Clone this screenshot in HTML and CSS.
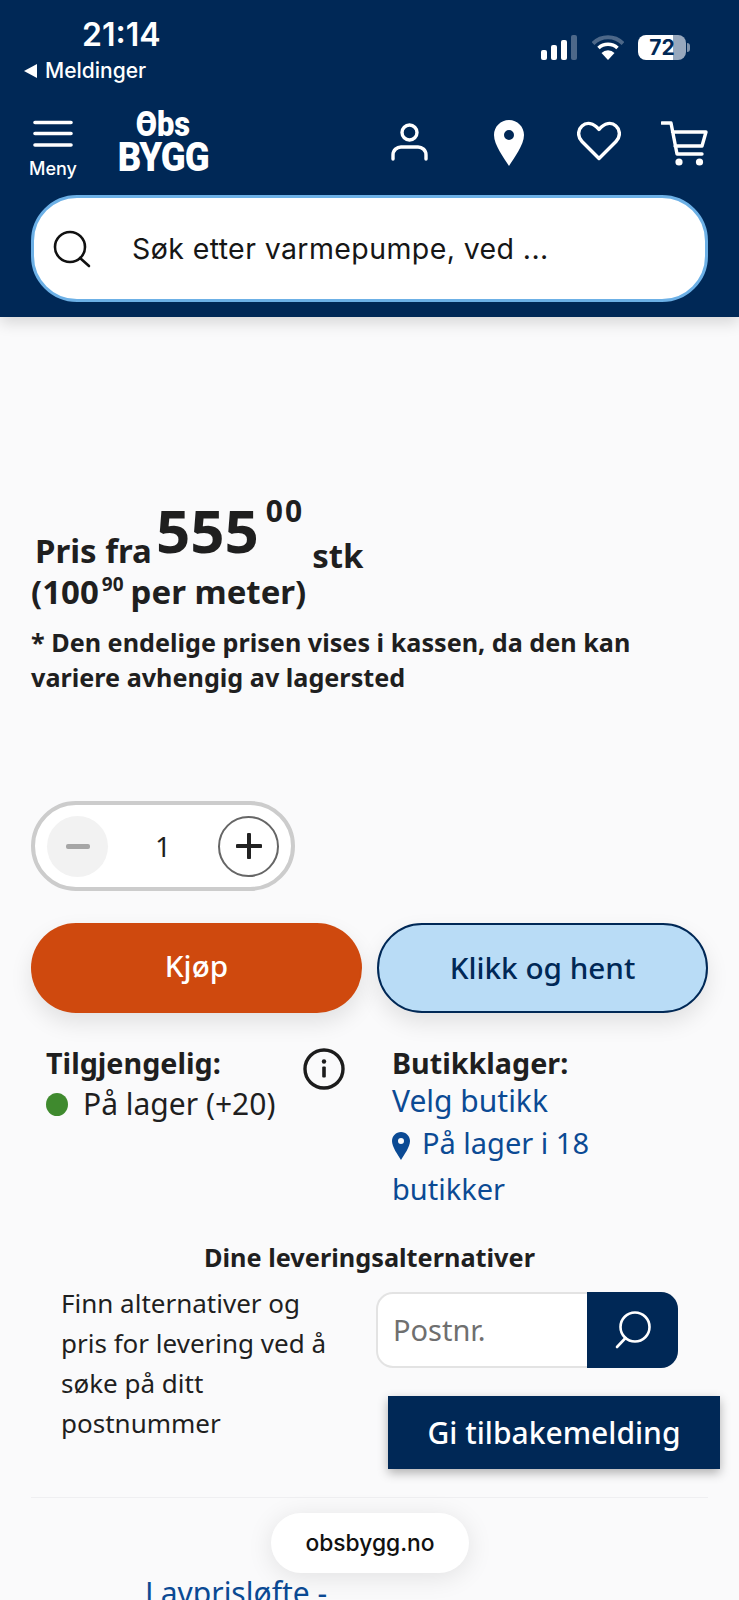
FILE: index.html
```html
<!DOCTYPE html>
<html lang="no">
<head>
  <meta charset="UTF-8">
  <meta name="viewport" content="width=device-width, initial-scale=1.0">
  <title>Obs BYGG</title>
  <link rel="stylesheet" href="styles.css">
</head>
<body>

  <header class="header">
    <!-- Phone status bar -->
    <div class="status">
      <div class="status-left">
        <div class="time">21:14</div>
        <div class="back"><span class="back-arrow"></span>Meldinger</div>
      </div>
      <div class="status-right">
        <svg width="37" height="25" viewBox="0 0 37 25">
          <rect x="0" y="15" width="6" height="10" rx="2" fill="#fff"/>
          <rect x="10" y="10" width="6" height="15" rx="2" fill="#fff"/>
          <rect x="20" y="5" width="6" height="20" rx="2" fill="#fff"/>
          <rect x="30" y="0" width="6" height="25" rx="2" fill="#fff" opacity="0.3"/>
        </svg>
        <svg width="32" height="25" viewBox="0 0 32 25">
          <path d="M1 8.5 A21 21 0 0 1 31 8.5" fill="none" stroke="#fff" stroke-opacity="0.3" stroke-width="4"/>
          <path d="M6.5 13 A14 14 0 0 1 25.5 13" fill="none" stroke="#fff" stroke-width="3.6"/>
          <path d="M16 25 L9.5 18 A9 9 0 0 1 22.5 18 Z" fill="#fff"/>
        </svg>
        <div class="battery"><span class="battery-num">72</span></div>
      </div>
    </div>

    <!-- Logo and icons -->
    <nav class="nav">
      <div class="menu">
        <svg width="40" height="28" viewBox="0 0 40 28">
          <path d="M2 2.5H38M2 13.5H38M2 25H38" stroke="#fff" stroke-width="3.6" stroke-linecap="round"/>
        </svg>
        <span class="menu-label">Meny</span>
      </div>
      <div class="logo">
        <span class="logo-top"><span class="logo-o">O</span>bs</span>
        <span class="logo-bottom">BYGG</span>
      </div>
      <div class="nav-icons">
        <svg class="icon-user" width="37" height="38" viewBox="0 0 37 38">
          <circle cx="18.5" cy="9.5" r="7.5" fill="none" stroke="#fff" stroke-width="3.4"/>
          <path d="M2 36V32C2 27 6 24 10 24H27C31 24 35 27 35 32V36" fill="none" stroke="#fff" stroke-width="3.4" stroke-linecap="round"/>
        </svg>
        <svg class="icon-pin" width="30" height="46" viewBox="0 0 30 46">
          <path fill-rule="evenodd" d="M15 0C6.7 0 0 6.7 0 15C0 25 10 38 15 46C20 38 30 25 30 15C30 6.7 23.3 0 15 0ZM15 10A5 5 0 1 1 15 20A5 5 0 1 1 15 10Z" fill="#fff"/>
        </svg>
        <svg class="icon-heart" width="44" height="40" viewBox="0 0 44 40">
          <path d="M22 37.5L5 20.5C0.5 16 0.5 9 5 5C9.5 0.8 16.5 1.5 22 8.5C27.5 1.5 34.5 0.8 39 5C43.5 9 43.5 16 39 20.5Z" fill="none" stroke="#fff" stroke-width="3.4" stroke-linejoin="round"/>
        </svg>
        <svg class="icon-cart" width="47" height="45" viewBox="0 0 47 45">
          <path d="M1 2H10L16 33H41M11.5 11H45L41 25H14" fill="none" stroke="#fff" stroke-width="3.4" stroke-linejoin="round" stroke-linecap="round"/>
          <circle cx="18" cy="41" r="3.6" fill="#fff"/>
          <circle cx="38.5" cy="41" r="3.6" fill="#fff"/>
        </svg>
      </div>
    </nav>

    <div class="search">
      <svg width="38" height="38" viewBox="0 0 38 38">
        <circle cx="17" cy="17" r="15" fill="none" stroke="#111" stroke-width="2.6"/>
        <path d="M27 28L36 36" stroke="#111" stroke-width="2.6" stroke-linecap="round"/>
      </svg>
      <span class="search-text">Søk etter varmepumpe, ved ...</span>
    </div>
  </header>

  <main class="content">
    <!-- Price -->
    <div class="price-row">
      <span class="price-label">Pris fra</span>
      <span class="price-main">555</span>
      <span class="price-cents">00</span>
      <span class="price-unit">stk</span>
    </div>
    <div class="price-meter">(100<sup class="price-sup">90</sup>per meter)</div>
    <p class="price-note">* Den endelige prisen vises i kassen, da den kan variere avhengig av lagersted</p>

    <!-- Quantity -->
    <div class="stepper">
      <div class="step step-minus"><span class="minus-bar"></span></div>
      <span class="qty">1</span>
      <div class="step step-plus">
        <svg width="26" height="26" viewBox="0 0 26 26">
          <path d="M13 1.5V24.5M1.5 13H24.5" stroke="#222" stroke-width="4" stroke-linecap="round"/>
        </svg>
      </div>
    </div>

    <div class="buy-row">
      <div class="btn btn-buy">Kjøp</div>
      <div class="btn btn-pick">Klikk og hent</div>
    </div>

    <!-- Stock -->
    <div class="stock">
      <div class="stock-online">
        <div class="stock-title">Tilgjengelig:</div>
        <div class="stock-line"><span class="dot"></span>På lager (+20)</div>
      </div>
      <svg class="info" width="42" height="42" viewBox="0 0 42 42">
        <circle cx="21" cy="21" r="19" fill="none" stroke="#1c1c1c" stroke-width="3.4"/>
        <circle cx="21" cy="13.5" r="2.2" fill="#1c1c1c"/>
        <rect x="19.2" y="18.5" width="3.6" height="11" rx="1" fill="#1c1c1c"/>
      </svg>
      <div class="stock-store">
        <div class="stock-title">Butikklager:</div>
        <a class="store-link">Velg butikk</a>
        <a class="store-link store-count">
          <svg class="store-pin" width="18" height="28" viewBox="0 0 18 28">
            <path fill-rule="evenodd" d="M9 0C4 0 0 4 0 9C0 15 6 23 9 28C12 23 18 15 18 9C18 4 14 0 9 0ZM9 6A3 3 0 1 1 9 12A3 3 0 1 1 9 6Z" fill="#0b4a94"/>
          </svg>På lager i 18 butikker</a>
      </div>
    </div>

    <!-- Delivery -->
    <h3 class="delivery-title">Dine leveringsalternativer</h3>
    <div class="delivery">
      <p class="delivery-text">Finn alternativer og pris for levering ved å søke på ditt postnummer</p>
      <div class="postcode">
        <span class="postcode-input">Postnr.</span>
        <div class="postcode-btn">
          <svg width="38" height="38" viewBox="0 0 38 38">
            <circle cx="21" cy="16" r="14.5" fill="none" stroke="#fff" stroke-width="2.6"/>
            <path d="M11.5 27L3 36" stroke="#fff" stroke-width="2.6" stroke-linecap="round"/>
          </svg>
        </div>
      </div>
    </div>

    <hr class="divider">
    <a class="promise">Lavprisløfte -</a>
  </main>

  <!-- Floating on top of the page -->
  <div class="feedback">Gi tilbakemelding</div>
  <div class="url-pill">obsbygg.no</div>

</body>
</html>
```

FILE: styles.css
```css
html, body {
  margin: 0;
  padding: 0;
}
body {
  position: relative;
  width: 739px;
  height: 1600px;
  overflow: hidden;
  background-color: #fafafb;
  color: #1f1f1f;
  font-family: "Noto Sans", Arial, sans-serif;
}

/* Header */
.header {
  box-sizing: border-box;
  height: 317px;
  background-color: #002856;
  box-shadow: 0 6px 14px rgba(0, 0, 0, 0.14);
  color: white;
}
.status {
  display: flex;
  justify-content: space-between;
  height: 94px;
  padding: 16px 53px 0 24px;
  box-sizing: border-box;
}
.time {
  margin-left: 58px;
  font-family: Inter, sans-serif;
  font-size: 32px;
  font-weight: 600;
  line-height: 38px;
}
.back {
  display: flex;
  align-items: center;
  margin-top: 3px;
  font-family: Inter, sans-serif;
  font-size: 21px;
  font-weight: 500;
  line-height: 28px;
}
.back-arrow {
  width: 0;
  height: 0;
  margin-right: 8px;
  border-top: 7px solid transparent;
  border-bottom: 7px solid transparent;
  border-right: 13px solid white;
}
.status-right {
  display: flex;
  align-items: center;
  gap: 14px;
  height: 25px;
  margin-top: 19px;
}
.battery {
  position: relative;
  width: 48px;
  height: 25px;
  border-radius: 8px;
  background: linear-gradient(to right, #fff 72%, #98a8bd 72%);
  color: #002856;
  text-align: center;
}
.battery::after {
  content: "";
  position: absolute;
  right: -4px;
  top: 8px;
  width: 3px;
  height: 9px;
  border-radius: 0 3px 3px 0;
  background-color: #7f93ac;
}
.battery-num {
  font-family: Inter, sans-serif;
  font-size: 21px;
  font-weight: 700;
  line-height: 25px;
}

.nav {
  display: flex;
  align-items: flex-start;
  height: 101px;
  padding: 0 31px 0 29px;
  box-sizing: border-box;
}
.menu {
  display: flex;
  flex-direction: column;
  align-items: center;
  width: 48px;
  padding-top: 26px;
}
.menu-label {
  margin-top: 8px;
  font-family: Inter, sans-serif;
  font-size: 18px;
  font-weight: 500;
  line-height: 26px;
}
.logo {
  display: flex;
  flex-direction: column;
  align-items: center;
  width: 94px;
  margin-left: 39px;
  padding-top: 15px;
  font-family: Roboto, sans-serif;
  font-weight: 900;
}
.logo-top {
  font-size: 35px;
  line-height: 32px;
  transform: scaleX(0.88);
}
.logo-bottom {
  font-size: 41px;
  line-height: 33px;
  letter-spacing: -1px;
  transform: scaleX(0.89);
}
.logo-o {
  position: relative;
}
.logo-o::after {
  content: "";
  position: absolute;
  left: 6px;
  right: 6px;
  top: 16px;
  height: 3px;
  background-color: white;
}
.nav-icons {
  display: flex;
  align-items: flex-start;
  margin-left: auto;
  padding-top: 26px;
}
.icon-user {
  margin-top: 3px;
}
.icon-pin {
  margin-left: 66px;
}
.icon-heart {
  margin-top: 1px;
  margin-left: 53px;
}
.icon-cart {
  margin-top: 1px;
  margin-left: 40px;
}

.search {
  display: flex;
  align-items: center;
  box-sizing: border-box;
  width: 677px;
  height: 107px;
  margin-left: 31px;
  padding-left: 19px;
  background-color: white;
  border: 3.5px solid #6cb0e6;
  border-radius: 46px;
  color: #161616;
}
.search-text {
  margin-left: 41px;
  font-family: Inter, sans-serif;
  font-size: 28.5px;
  letter-spacing: 0.4px;
}

/* Price */
.content {
  padding: 0 31px;
}
.price-row {
  display: flex;
  align-items: flex-start;
  height: 72px;
  margin-top: 181px;
  font-weight: 700;
}
.price-label {
  margin: 31px 0 0 4px;
  font-size: 33px;
  line-height: 44px;
}
.price-main {
  margin-left: 4px;
  font-size: 60px;
  line-height: 64px;
}
.price-cents {
  margin: -6px 0 0 7px;
  font-size: 30px;
  line-height: 38px;
  letter-spacing: 2px;
}
.price-unit {
  margin: 36px 0 0 8px;
  font-size: 33px;
  line-height: 44px;
}
.price-meter {
  font-size: 33px;
  font-weight: 700;
  line-height: 44px;
}
.price-sup {
  margin: 0 7px 0 3px;
  font-size: 19px;
  line-height: 0;
  vertical-align: 13px;
}
.price-note {
  width: 660px;
  margin: 11px 0 0 0;
  font-size: 25.2px;
  font-weight: 700;
  line-height: 35px;
}

/* Quantity and buttons */
.stepper {
  display: flex;
  align-items: center;
  justify-content: space-between;
  box-sizing: border-box;
  width: 264px;
  height: 90px;
  margin-top: 106px;
  padding: 0 12px;
  background-color: white;
  border: 4px solid #cccccc;
  border-radius: 45px;
}
.step {
  display: flex;
  align-items: center;
  justify-content: center;
  box-sizing: border-box;
  width: 61px;
  height: 61px;
  border-radius: 50%;
}
.step-minus {
  background-color: #f2f2f2;
}
.minus-bar {
  width: 24px;
  height: 5px;
  border-radius: 2px;
  background-color: #a6a6a6;
}
.step-plus {
  border: 2px solid #666;
}
.qty {
  font-size: 28px;
}
.buy-row {
  display: flex;
  gap: 15px;
  margin-top: 32px;
}
.btn {
  box-sizing: border-box;
  width: 331px;
  height: 90px;
  border-radius: 45px;
  text-align: center;
  font-size: 29.7px;
  font-weight: 500;
  line-height: 86px;
  box-shadow: 0 10px 22px rgba(0, 0, 0, 0.1);
}
.btn-buy {
  background-color: #cf490e;
  color: white;
}
.btn-pick {
  background-color: #b9dcf6;
  border: 2px solid #002856;
  color: #002856;
}

/* Stock */
.stock {
  display: flex;
  margin-top: 31px;
  font-size: 30px;
  line-height: 38px;
}
.stock-online {
  width: 257px;
  margin-left: 15px;
}
.stock-title {
  font-size: 28.7px;
  font-weight: 700;
}
.stock-line {
  display: flex;
  align-items: center;
  margin-top: 3px;
}
.dot {
  width: 22px;
  height: 23px;
  margin-right: 15px;
  border-radius: 50%;
  background-color: #3f8a2e;
}
.info {
  margin-top: 4px;
}
.stock-store {
  width: 290px;
  margin-left: 47px;
}
.store-link {
  display: block;
  color: #0b4a94;
}
.store-count {
  font-size: 29px;
  line-height: 46px;
}
.store-pin {
  margin-right: 12px;
  vertical-align: -6px;
}

/* Delivery */
.delivery-title {
  margin: 26px 0 0 0;
  text-align: center;
  font-size: 25.3px;
  font-weight: 700;
  line-height: 38px;
}
.delivery {
  display: flex;
  margin-top: 7px;
}
.delivery-text {
  width: 290px;
  margin: 0 0 0 30px;
  font-size: 26px;
  line-height: 40px;
}
.postcode {
  display: flex;
  box-sizing: border-box;
  width: 302px;
  height: 76px;
  margin: 9px 0 0 25px;
  background-color: white;
  border: 2px solid #e3e3e3;
  border-radius: 17px;
}
.postcode-input {
  flex: 1;
  padding-left: 15px;
  color: #6f6f6f;
  font-size: 29px;
  line-height: 72px;
}
.postcode-btn {
  display: flex;
  align-items: center;
  justify-content: center;
  width: 91px;
  margin: -2px -2px -2px 0;
  background-color: #002856;
  border-radius: 0 17px 17px 0;
}

.divider {
  margin: 54px 0 0 0;
  border: none;
  border-top: 1px solid #efeff1;
}
.promise {
  display: block;
  margin: 75px 0 0 114px;
  color: #0b4a94;
  font-size: 30px;
  line-height: 40px;
}

/* Things on top of the page */
.feedback {
  position: absolute;
  left: 388px;
  top: 1396px;
  box-sizing: border-box;
  width: 332px;
  height: 73px;
  background-color: #002856;
  box-shadow: 0 4px 10px rgba(0, 0, 0, 0.3);
  color: white;
  text-align: center;
  font-size: 30px;
  font-weight: 500;
  line-height: 73px;
}
.url-pill {
  position: absolute;
  left: 271px;
  top: 1513px;
  width: 198px;
  height: 60px;
  border-radius: 30px;
  background-color: white;
  box-shadow: 0 4px 26px rgba(0, 0, 0, 0.1);
  color: #111;
  text-align: center;
  font-family: Inter, sans-serif;
  font-size: 22.8px;
  font-weight: 500;
  line-height: 60px;
}
```
